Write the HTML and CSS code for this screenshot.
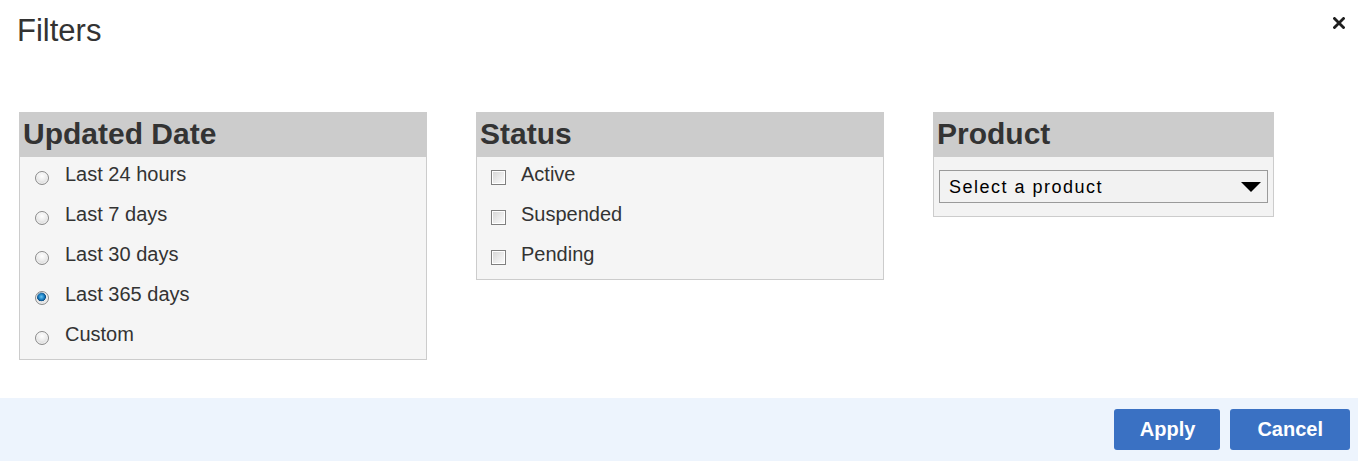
FILE: index.html
```html
<!DOCTYPE html>
<html>
<head>
<meta charset="utf-8">
<link rel="stylesheet" href="styles.css">
</head>
<body>
<div class="dialog">
  <div class="head">
    <h1 class="title">Filters</h1>
    <button class="close" aria-label="Close">
      <svg width="12" height="12" viewBox="0 0 12 12"><path d="M1.5 1.5 L10.5 10.5 M10.5 1.5 L1.5 10.5" stroke="#1f1f1f" stroke-width="2.8" stroke-linecap="square"/></svg>
    </button>
  </div>
  <div class="panels">
    <div class="panel panel-wide">
      <div class="panel-head">Updated Date</div>
      <div class="panel-body list">
        <label class="item"><input type="radio" name="d" class="radio"><span>Last 24 hours</span></label>
        <label class="item"><input type="radio" name="d" class="radio"><span>Last 7 days</span></label>
        <label class="item"><input type="radio" name="d" class="radio"><span>Last 30 days</span></label>
        <label class="item"><input type="radio" name="d" class="radio" checked><span>Last 365 days</span></label>
        <label class="item"><input type="radio" name="d" class="radio"><span>Custom</span></label>
      </div>
    </div>
    <div class="panel panel-wide">
      <div class="panel-head">Status</div>
      <div class="panel-body list">
        <label class="item item-check"><input type="checkbox" class="check"><span>Active</span></label>
        <label class="item item-check"><input type="checkbox" class="check"><span>Suspended</span></label>
        <label class="item item-check"><input type="checkbox" class="check"><span>Pending</span></label>
      </div>
    </div>
    <div class="panel panel-narrow">
      <div class="panel-head">Product</div>
      <div class="panel-body product-body">
        <div class="select">
          <span class="select-text">Select a product</span>
          <svg class="caret" width="20" height="10" viewBox="0 0 20 10"><path d="M0 0 H20 L10 10 Z" fill="#000"/></svg>
        </div>
      </div>
    </div>
  </div>
  <div class="footer">
    <button class="btn btn-apply">Apply</button>
    <button class="btn btn-cancel">Cancel</button>
  </div>
</div>
</body>
</html>
```

FILE: styles.css
```css
* { box-sizing: border-box; }
html, body { margin: 0; padding: 0; background: #fff; }
body { font-family: "Liberation Sans", Arial, sans-serif; color: #333; }

.dialog {
  width: 1358px;
  height: 461px;
  display: flex;
  flex-direction: column;
  position: relative;
}

.head {
  padding: 13px 0 0 17px;
}
.title {
  margin: 0;
  font-size: 31px;
  font-weight: normal;
  line-height: 36px;
  color: #333;
}
.close {
  position: absolute;
  top: 17px;
  right: 13px;
  width: 12px;
  height: 12px;
  padding: 0;
  border: 0;
  background: none;
  display: block;
}
.close svg { display: block; }

.panels {
  display: flex;
  align-items: flex-start;
  gap: 49px;
  margin-top: 63px;
  padding-left: 19px;
}
.panel {
  border: 1px solid #cccccc;
  background: #f5f5f5;
}
.panel-wide { width: 408px; }
.panel-narrow { width: 341px; background: #f3f3f3; }

.panel-head {
  background: #cccccc;
  height: 44px;
  line-height: 42px;
  padding: 0 0 2px 3px;
  font-size: 30px;
  font-weight: bold;
  color: #333;
}

.list {
  display: flex;
  flex-direction: column;
  gap: 16px;
  padding: 5px 0 13px 15px;
}
.item {
  display: flex;
  align-items: flex-start;
  font-size: 20px;
  line-height: 24px;
  color: #333;
}
.item-check { margin-left: -1px; }

.radio {
  appearance: none;
  -webkit-appearance: none;
  margin: 9px 16px 0 0;
  width: 14px;
  height: 14px;
  border-radius: 50%;
  border: 1px solid #8a8a8a;
  background: radial-gradient(circle at 50% 35%, #ffffff 0%, #ececec 45%, #c8c8c8 100%);
  box-shadow: inset 0 0 0 1px rgba(255,255,255,0.6);
  flex: none;
}
.radio:checked {
  background:
    radial-gradient(circle at 45% 40%, #6cc4f2 0px, #1f86c9 2.5px, #0c4e85 4.2px, rgba(0,0,0,0) 4.8px),
    radial-gradient(circle at 50% 35%, #ffffff 0%, #ececec 45%, #c8c8c8 100%);
}

.check {
  appearance: none;
  -webkit-appearance: none;
  margin: 8px 15px 0 0;
  width: 15px;
  height: 15px;
  border: 1px solid #7f7f7f;
  box-shadow: inset 0 0 0 1px #ffffff;
  background: linear-gradient(135deg, #d4d4d4 0%, #eeeeee 60%, #fafafa 100%);
  flex: none;
}

.product-body {
  padding: 13px 5px 13px 5px;
}
.select {
  height: 33px;
  border: 1px solid #9a9a9a;
  background: #f2f2f2;
  display: flex;
  align-items: center;
  justify-content: space-between;
  padding: 0 6px 0 9px;
}
.select-text {
  font-size: 18px;
  letter-spacing: 1.5px;
  color: #000;
  line-height: 20px;
}
.caret { display: block; }

.footer {
  margin-top: auto;
  height: 63px;
  background: #edf4fd;
  display: flex;
  justify-content: flex-end;
  align-items: flex-start;
  gap: 10px;
  padding: 11px 8px 0 0;
}
.btn {
  height: 41px;
  border: 0;
  border-radius: 3px;
  background: #3a71c3;
  color: #fff;
  font-family: "Liberation Sans", Arial, sans-serif;
  font-weight: bold;
  font-size: 20px;
  line-height: 41px;
  padding: 0 25px 0 26px;
}
.btn-cancel { padding: 0 27px; }
```
